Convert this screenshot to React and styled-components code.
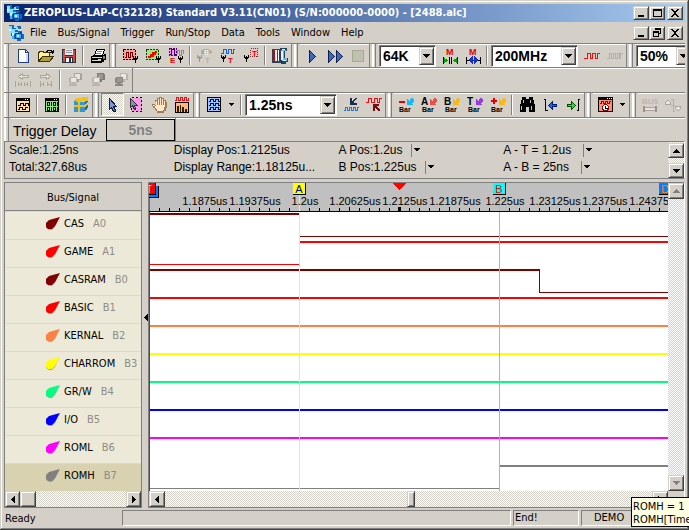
import React from "react";
import styled, { createGlobalStyle, css } from "styled-components";

const face = "#d4d0c8";
const shade = "#808080";
const ui = '"DejaVu Sans Condensed", "DejaVu Sans", sans-serif';
const sans = '"Liberation Sans", Arial, sans-serif';

const dither = css`
  background: conic-gradient(#fff 25%, ${face} 0 50%, #fff 0 75%, ${face} 0) 0 0 / 2px 2px;
`;
const raised = css`
  background: ${face};
  border: 1px solid;
  border-color: ${face} #404040 #404040 ${face};
  box-shadow: inset 1px 1px #fff, inset -1px -1px ${shade};
`;

const Global = createGlobalStyle`
  * { box-sizing: border-box; }
  body { margin: 0; background: ${face}; }
  button, input, select { font: inherit; color: inherit; padding: 0; margin: 0; border-radius: 0; }
  ul { list-style: none; margin: 0; padding: 0; }
  svg { display: block; flex: none; }
`;

const Frame = styled.div`
  position: relative;
  display: flex;
  flex-direction: column;
  height: 100vh;
  min-height: 530px;
  padding: 4px;
  overflow: hidden;
  background: ${face};
  box-shadow: inset -1px -1px #404040, inset 1px 1px ${face}, inset -2px -2px ${shade}, inset 2px 2px #fff;
  font: 11px/14px ${ui};
  color: #000;
  white-space: nowrap;
`;
const TitleBar = styled.header`
  display: flex;
  align-items: center;
  flex: none;
  height: 18px;
  padding: 0 2px;
  gap: 2px;
  color: #fff;
  background: linear-gradient(90deg, #0a246a, #a6caf0);
`;
const Title = styled.h1`
  flex: 1;
  margin: 0;
  font: bold 11px/16px ${ui};
`;
const WindowButtons = styled.div`
  display: flex;
  margin-left: auto;
  button:last-child { margin-left: 2px; }
`;
const SmallButton = styled.button`
  ${raised}
  display: grid;
  place-items: center;
  width: 16px;
  height: 14px;
  color: #000;
`;
const MenuBar = styled.nav`
  display: flex;
  align-items: center;
  flex: none;
  height: 21px;
  padding: 0 2px 0 4px;
`;
const MenuItem = styled.button`
  border: 0;
  background: none;
  padding: 0 5px 0 6px;
`;

const Toolbar = styled.div`
  display: flex;
  flex: none;
  height: ${(p) => (p.$tall ? 25 : 24)}px;
  border-top: 1px solid ${shade};
  box-shadow: inset 0 1px #fff;
  overflow: hidden;
`;
const Grip = styled.span`
  flex: none;
  width: 7px;
  background: linear-gradient(90deg, #fff 2px, ${face} 2px 4px, ${shade} 4px 5px, ${face} 5px);
`;
const Band = styled.span`
  flex: none;
  width: 9px;
  background: linear-gradient(90deg, ${shade} 1px, ${face} 1px 3px, #fff 3px 5px, ${face} 5px 6px, ${shade} 6px 7px, ${face} 7px);
`;
const End = styled.span`
  flex: none;
  width: 2px;
  border-left: 1px solid ${shade};
`;
const Rule = styled.span`
  flex: none;
  width: 2px;
  margin: 2px;
  border-left: 1px solid ${shade};
  border-right: 1px solid #fff;
`;
const ToolButton = styled.button`
  display: grid;
  place-items: center;
  flex: none;
  width: ${(p) => (p.$narrow ? 13 : 23)}px;
  height: 23px;
  border: 1px solid transparent;
  background: none;
  ${(p) => p.$on && css`
    ${dither}
    border-color: ${shade} #fff #fff ${shade};
  `}
`;
const ComboBox = styled.span`
  display: grid;
  flex: none;
  width: ${(p) => p.$width}px;
  height: 22px;
  margin: 1px 2px 0 1px;
  padding: 1px;
  background: #fff;
  border: 1px solid;
  border-color: ${shade} #fff #fff ${shade};
  box-shadow: inset 1px 1px #404040;
`;
const ComboSelect = styled.select`
  grid-area: 1 / 1;
  min-width: 0;
  appearance: none;
  border: 0;
  padding: 0 16px 0 2px;
  background: #fff;
  && { font: bold 14px/18px ${sans}; }
`;
const ComboArrow = styled.span`
  ${raised}
  grid-area: 1 / 1;
  justify-self: end;
  display: grid;
  place-items: center;
  width: 15px;
  pointer-events: none;
`;
const DelayLabel = styled.label`
  width: 95px;
  padding: 4px 0 0 2px;
  font: 14px/18px ${sans};
`;
const DelayInput = styled.input`
  width: 69px;
  height: 22px;
  margin: 1px 0;
  border: 1px solid #000;
  background: ${face};
  text-align: center;
  && { color: ${shade}; font: bold 14px/18px ${sans}; }
`;

const Info = styled.section`
  display: flex;
  flex: none;
  height: 38px;
  margin-bottom: 3px;
  border: 1px solid ${shade};
  border-right-color: #fff;
  font: 12px/17px ${sans};
`;
const InfoGrid = styled.div`
  display: grid;
  flex: 1;
  grid-template-columns: repeat(4, 1fr);
  grid-auto-rows: 17px;
  padding-left: 4px;
`;
const InfoPick = styled.button`
  display: flex;
  align-items: center;
  gap: ${(p) => (p.$wide ? 12 : 8)}px;
  border: 0;
  background: none;
  text-align: left;
  svg { border-left: 1px solid ${shade}; }
`;
const Spin = styled.div`
  ${dither}
  display: flex;
  flex-direction: column;
  justify-content: space-between;
  width: 16px;
  padding: 1px 0 0;
`;
const ScrollButton = styled.button`
  ${raised}
  display: grid;
  place-items: center;
  flex: none;
  width: ${(p) => (p.$wide ? 16 : 15)}px;
  height: ${(p) => (p.$short ? 15 : 16)}px;
`;

const Main = styled.main`
  display: flex;
  flex: 1;
  min-height: 0;
`;
const Signals = styled.aside`
  display: flex;
  flex-direction: column;
  flex: none;
  width: 138px;
  border: 1px solid ${shade};
  background: #ece9d8;
`;
const SignalsHead = styled.h2`
  flex: none;
  margin: 0;
  height: 28px;
  border-bottom: 1px solid ${shade};
  background: ${face};
  font: 11px/30px ${ui};
  text-align: center;
`;
const SignalList = styled.ul`
  flex: 1;
  min-height: 0;
  overflow: hidden;
`;
const Signal = styled.li`
  display: flex;
  align-items: center;
  height: 28px;
  padding: 0 0 4px 40px;
  border-top: 1px solid #dedac9;
  background: ${(p) => (p.$selected ? "#d8d2b0" : "#ece9d8")};
`;
const SignalName = styled.span`
  margin: 0 9px 0 4px;
`;
const Channel = styled.span`
  color: #8c8c88;
`;
const Splitter = styled.div`
  display: flex;
  align-items: center;
  justify-content: flex-end;
  flex: none;
  width: 6px;
  padding-bottom: 56px;
`;
const Scope = styled.section`
  display: grid;
  flex: 1;
  min-width: 0;
  grid-template: 29px 1fr 16px / minmax(0, 1fr) 16px;
  border: 1px solid ${shade};
  border-right-color: #fff;
`;
const Ruler = styled.div`
  position: relative;
  overflow: hidden;
  background: #c0c0c0;
  border-bottom: 1px solid #000;
`;
const RulerTicks = styled.svg`
  position: absolute;
  inset: 0;
`;
const TimeLabels = styled.div`
  position: relative;
  display: grid;
  grid-template-columns: repeat(10, 50px);
  padding: 11px 0 0 31px;
  font: 11px/14px ${sans};
  span { display: flex; justify-content: center; }
`;
const Flag = styled.span`
  position: absolute;
  top: ${(p) => p.$top || 0}px;
  left: ${(p) => p.$at - 6}px;
  width: 13px;
  height: 12px;
  border: solid #000;
  border-width: 0 1px 1px 0;
  background: ${(p) => p.$fill};
  color: ${(p) => p.$ink};
  font: 11px/12px ${sans};
  text-align: center;
`;
const Plot = styled.div`
  position: relative;
  min-height: 0;
  overflow: hidden;
  background: #fff;
`;
const PlotSvg = styled.svg`
  position: absolute;
  inset: 0;
`;
const VScroll = styled.div`
  ${dither}
  grid-row: 1 / 3;
  grid-column: 2;
  display: flex;
  flex-direction: column;
  justify-content: space-between;
`;
const HScroll = styled.div`
  ${dither}
  display: flex;
  flex: none;
  height: 16px;
`;
const Track = styled.span`
  flex: ${(p) => p.$grow} 1 0;
`;
const Thumb = styled.span`
  ${raised}
  flex: none;
  width: ${(p) => p.$size}px;
`;
const Status = styled.footer`
  display: flex;
  flex: none;
  height: 16px;
  margin-top: 2px;
  gap: 2px;
`;
const StatusText = styled.span`
  width: 116px;
  padding-left: 1px;
  line-height: 17px;
`;
const Pane = styled.span`
  flex: ${(p) => (p.$size ? `0 0 ${p.$size}px` : "1")};
  padding-left: ${(p) => p.$pad || 1}px;
  border: 1px solid;
  border-color: ${shade} #fff #fff ${shade};
`;
const Tip = styled.div`
  position: absolute;
  right: 0;
  bottom: 3px;
  width: 58px;
  height: 30px;
  padding: 2px 0 0 1px;
  overflow: hidden;
  border: 1px solid #000;
  border-right: 0;
  background: #ffffe1;
  line-height: 13px;
`;

/* ---------- icons ---------- */
const Pic = ({ w = 16, h = 16, children }) => (
  <svg width={w} height={h} viewBox={`0 0 ${w} ${h}`} fill="none" shapeRendering="crispEdges" aria-hidden="true">
    {children}
  </svg>
);
const L = ({ d, c = "#000", f = "none", w = 1 }) => <path d={d} stroke={c} fill={f} strokeWidth={w} />;
const F = ({ d, c = "#000" }) => <path d={d} fill={c} />;
const Letter = ({ x, y, s = 8, c = "#000", children }) => (
  <text x={x} y={y} fill={c} fontSize={s} fontWeight="bold" fontFamily="Liberation Sans, Arial, sans-serif">{children}</text>
);
const Probe = ({ x, y, c = "#000" }) => (
  <g transform={`translate(${x} ${y})`}><F c={c} d="M0 0h1v2h1v-1h1v1h1v-2h1v3h-1v1h-1v3h-1v-3h-1v-1h-1z" /></g>
);
const arrows = {
  down: [7, 4, "M0 0h7L3.5 4z"],
  up: [7, 4, "M0 4h7L3.5 0z"],
  left: [4, 7, "M4 0v7L0 3.5z"],
  right: [4, 7, "M0 0v7L4 3.5z"],
};
const Arrow = ({ dir = "down", c = "#000" }) => {
  const [w, h, d] = arrows[dir];
  return <Pic w={w} h={h}><F d={d} c={c} /></Pic>;
};
const SmallArrow = () => <Pic w={5} h={3}><F d="M0 0h5v1h-1v1h-1v1h-1v-1h-1v-1h-1z" /></Pic>;
const PickArrow = () => <Pic w={10} h={13}><F d="M2 4h7v1h-1v1h-1v1h-1v1h-1v-1h-1v-1h-1v-1h-1z" /></Pic>;

const AppIcon = () => (
  <Pic>
    <F c="#1468c8" d="M1 0h5v3h3v-2h4v3h-3v2h4v3h2v5h-3v2h-4v-2h-4v-3h-2v-3h-2v-3h1v-3h-1z" />
    <F c="#7fe0ff" d="M1 1h3v3h4v-2h2v3h-3v2h3v2h-4v4h-2v-5h-3z" />
    <F c="#d8faff" d="M1 4h2v2h-2zM9 4h4v1h-4zM4 8h2v2h-2z" />
    <F c="#0a3c98" d="M7 8h5v-1h2v6h-2v1h-5z" />
    <F c="#38b4f4" d="M8 9h5v4h-5zM4 11h2v3h-2z" />
    <F c="#e8fcff" d="M9 10h2v2h-2z" />
  </Pic>
);
const icons = {
  blank: <><L c="#1f3f7f" f="#fff" d="M3.5 1.5h7l3 3v10h-10z" /><L c="#1f3f7f" d="M10.5 1.5v3h3" /><F c="#c8daf4" d="M11 6h2v8h-2z" /></>,
  open: <><L d="M.5 13v-8.500h1v-1h4v1h6v3" c="#3a3000" f="#fff29a" /><L c="#3a3000" f="#b49c38" d="M.5 13.500l4-5h11l-4 5z" /><L d="M8 3.500h1v-1h4v1h1v2M11.500 4.500h4M15.500 2v3" /></>,
  save: <><F c="#27313c" d="M1 1h14v14h-14z" /><F c="#c45050" d="M2 2h2v12h-2zM12 2h2v12h-2zM4 8h8v1h-8z" /><F c="#e8eef0" d="M4 1h8v6h-8z" /><F c="#8a9aa0" d="M5 2h6v1h-6zM5 4h6v1h-6z" /><F c="#f4f4f4" d="M5 10h6v4h-6z" /><F c="#27313c" d="M8 10h2v4h-2z" /></>,
  print: <><L f="#fff" d="M4.500 7.500l2-6h8l-2 6z" /><F c="#888" d="M7 3h5v1h-5zM6 5h5v1h-5z" /><F d="M1 8h2v-1h11v-1h2v6h-2v2h-2v1h-11z" /><F c="#d8d8d0" d="M2 9h10v1h-10zM2 12h9v1h-9z" /><F c="#f0e060" d="M8 11h3v1h-3z" /><F c="#888" d="M13 8h2v3h-2z" /></>,
  boxRed: <><path d="M1.500 1.500h12v10h-12z" stroke="#000" fill="#ff9c9c" strokeDasharray="2 1" /><L c="#700000" d="M3 9.500h1.500v-5h2v5h2v-5h2v4h1" /><Probe x={11} y={8} /></>,
  boxGreen: <><path d="M1.500 1.500h12v10h-12z" stroke="#104010" fill="#90f080" strokeDasharray="2 1" /><F c="#f00" d="M3 10v-2h2v-2h2v-2h3v-1h2v2h-1v2h-2v2h-3v1z" /><Probe x={11} y={8} /></>,
  boxPurple: <><path d="M1.500 .5h7v7h-7z" stroke="#600070" fill="#f890f0" strokeDasharray="2 1" /><L c="#400060" d="M1 6.500h2.500v-5h3v5h2" /><L c="#8c8890" d="M9.500 6v-4h2v5h2v-5h2v4" /><Letter x={2} y={15} s={8} c="#e00000">E</Letter><Probe x={10} y={8} /></>,
  bProbe: <><F c="#b0aca0" d="M6 1h6v1h2v1h1v2h-1v1h-2v1h-6v-1h-2v-4h2z" /><Letter x={7} y={7} s={7} c="#f4f0e8">B</Letter><Probe x={0} y={7} c="#9c988c" /><Letter x={8} y={15} s={8} c="#b4b0a4">T</Letter></>,
  tProbe: <><L c="#1060ff" d="M1 5.500h2.500v-4h3v4h2v-4h3v4h2v-4h1" /><Probe x={1} y={7} /><Letter x={8} y={15} c="#e00000">T</Letter></>,
  tBox: <><path d="M7.500 .5h7v8h-7z" stroke="#803030" fill="#ffb8b8" strokeDasharray="1 1" /><Letter x={9} y={8} s={8} c="#e00000">T</Letter><Probe x={1} y={7} /></>,
  spool: <><F c="#28405c" d="M0 1h8v-1h7v3h-2v7h3v4h-2v2h-5v-1h-9z" /><F c="#78b4dc" d="M9 2h5v1h-2v7h3v3h-5z" /><F c="#e8f4fc" d="M9 3h2v9h-2zM10 1h3v1h-3zM11 12h3v1h-3z" /><F c="#fff" d="M2 2h5v11h-5z" /><L c="#e00000" d="M1 1.500h6M2.500 2v11M5.500 2v11M1 13.500h7" /></>,
  play: <L c="#10204c" f="#3c68c0" d="M5.500 2.500v12l6-6z" />,
  forward: <L c="#10204c" f="#3c68c0" d="M1.500 2.500v12l6-6zM9.500 2.500v12l6-6z" />,
  stop: <L c="#a8a898" f="#c0c0b0" d="M2.500 2.500h11v11h-11z" />,
  mIn: <><Letter x={4} y={7} s={9} c="#e00000">M</Letter><F c="#00a800" d="M1 9l5 3.500l-5 3.500zM16 9l-5 3.500l5 3.500z" /><L d="M1.500 9v7M7.500 9v7M9.500 9v7M15.500 9v7" /></>,
  mOut: <><Letter x={4} y={7} s={9} c="#e00000">M</Letter><L d="M1.500 9v7M15.500 9v7M2 12.500h13" /><F c="#1030d0" d="M8 8v8l-5-4zM9 8v8l5-4z" /></>,
  wave: <L c="#e81010" d="M0 10.500h3.500v-5h3v5h2v-5h3v5h2v-5h2" />,
  waveOff: <L c="#b4b0a4" d="M0 10.500h2.500v-5h2v5h2v-5h2v5h2v-5h2v5h1v-5h2" />,
  goL: <><L c="#aaa69c" f="#e8e4dc" d="M3.500 4.500l4-3v2h6v2h-6v2z" /><L c="#aaa69c" d="M.5 9v6M15.500 9v6M3.500 10v4M4 12.500h2M6.500 10v4M9.500 10v4M12.500 10v4M10 12.500h2" /></>,
  goR: <><L c="#aaa69c" f="#e8e4dc" d="M12.500 4.500l-4-3v2h-6v2h6v2z" /><L c="#aaa69c" d="M2.500 9v6M13.500 9v6M5.500 10v4M9.500 10v4M3 12.500h2M10 12.500h3" /></>,
  pc: <><F c="#a8a49c" d="M7 1h7v1h1v6h-3v2h-5z" /><F c="#e8e4dc" d="M8 2h5v5h-5z" /><F c="#b8b4ac" d="M3 5h7v6h-2v1h2v2h-8v-2h2v-1h-2v-5h1z" /><F c="#ece8e0" d="M4 6h5v4h-5z" /></>,
  pcDark: <><F c="#807c78" d="M7 1h7v1h1v6h-3v2h-5z" /><F c="#9c9890" d="M8 2h5v5h-5z" /><F c="#b8b4ac" d="M3 5h7v6h-2v1h2v2h-8v-2h2v-1h-2v-5h1z" /><F c="#ece8e0" d="M4 6h5v4h-5z" /></>,
  pcFill: <><F c="#b8b4ac" d="M7 1h7v1h1v6h-3v2h-5z" /><F c="#ece8e0" d="M8 2h5v5h-5z" /><F c="#8c8880" d="M3 5h7v6h-2v1h2v2h-8v-2h2v-1h-2v-5h1z" /><F c="#9c9890" d="M4 6h5v4h-5z" /></>,
  winWave: <><L f="#ffe08c" d="M1.500 1.500h13v13h-13z" /><F d="M1 1h14v3h-14z" /><F c="#fff" d="M10 2h1v1h-1zM12 2h1v1h-1z" /><L d="M3 8.500h2v-2h3v2h2v-2h3v2M3 12.500h1v-2h3v2h3v-2h3" /></>,
  winBits: <><L f="#8cf070" d="M1.500 1.500h13v13h-13z" /><F d="M1 1h14v3h-14z" /><F c="#fff" d="M10 2h1v1h-1zM12 2h1v1h-1z" /><L d="M3.500 5.500h2v3h-2zM7.500 5v4M9.500 5.500h2v3h-2zM13.500 5v4M3.500 10.500h2v3h-2zM7.500 10v4M9.500 10.500h2v3h-2zM13.500 10v4" /></>,
  cube: <><F c="#2c98dc" d="M1 4h1v-1h2v-1h11v9h-1v2h-2v2h-11z" /><F c="#90d8f8" d="M2 5h2v-2h10v1h-2v1z" /><F c="#1868a8" d="M12 5h1v-1h2v7h-1v2h-2z" /><L c="#f0c020" w={2} d="M6 5v10M1 9h11l3-3" /><L c="#f0c020" w={2} d="M6 5l3-4M9 1h5v2h-6M7 2h-3v2h3" /></>,
  cursor: <L c="#101c4c" f="#7c98cc" d="M4.500 1.500v11l2-2 2 4h2v-1l-2-4h3z" />,
  cursorBox: <><path d="M3.500 .5h10v14h-10z" stroke="#000" fill="#f898e8" strokeDasharray="2 2" /><L c="#303040" f="#9090a0" d="M2.500 1.500v9l2-2 2 4h1v-1l-1-3h3z" /></>,
  hand: <><F c="#a07c54" d="M4 3h2v-2h2v-1h3v1h2v2h2v2h1v6h-1v3h-2v2h-7v-2h-1v-1h-1v-2h-2v-2h-1v-2h3v1h1v-3h-1z" /><F c="#ffe8c8" d="M5 4h1v4h1v-6h1v6h1v-7h1v7h1v-6h1v6h1v-4h1v6h-1v3h-1v1h-6v-2h-1v-1h-1v-2h-2v-1h2v1h1z" /></>,
  chart: <><L c="#e81010" d="M1 3.500h1.500v-3h2v3h2v-3h2v3h2v-3h2v3h2v-3" /><L f="#ffb878" d="M1.500 5.500h13v10h-13z" /><F c="#301c08" d="M3 9h2v6h-2zM6 8h1v7h-1zM8 10h2v5h-2zM11 12h2v3h-2z" /></>,
  waves3: <><L c="#000" f="#9cc4ff" d="M1.500 .5h13v14h-13z" /><L c="#001040" d="M3 4.500h1v-2h3v2h2v-2h3v2h2M3 8.500h1v-2h3v2h2v-2h3v2h2M3 12.500h1v-2h3v2h2v-2h3v2h2" /></>,
  zoomDn: <><F c="#16304c" d="M7 1h2v3h1v-1h1v-1h1v-1h2v1h-1v1h-1v1h-1v2h3v2h-7z" /><L c="#1878e8" d="M1 13.500h1.500v-3h2v3h2v-3h2v3h2v-3h2v3h2v-3h1" /></>,
  zoomUp: <><L c="#e81010" d="M0 5.500h2.500v-4h3v4h3v-4h3v4h2v-4h2" /><F c="#701010" d="M7 7h6v2h-2v1h1v1h1v1h1v2h-2v-1h-1v-1h-1v-1h-1v3h-2z" /></>,
  find: <><F d="M3 0h4v2h3v-2h4v3h1v4h1v8h-6v-5h-3v5h-6v-8h1v-4h1z" /><F c="#c0c0c0" d="M4 3h1v3h-1zM11 3h1v3h-1zM2 9h1v4h-1zM12 9h1v4h-1z" /></>,
  back: <><L d="M2 2.500h1.500v11h2" /><L c="#001c80" f="#2060ff" d="M6.500 8.500l4-4v3h4v2h-4v3z" /></>,
  fwd: <><L d="M15 2.500h-1.500v11h-2" /><L c="#004c00" f="#20e820" d="M10.500 8.500l-4-4v3h-4v2h4v3z" /></>,
  clock: <><L f="#ff8c7c" d="M1.500 .5h14v14h-14z" /><F d="M1 0h15v3h-15z" /><F c="#fff" d="M10 1h1v1h-1zM12 1h1v1h-1zM14 1h1v1h-1z" /><L c="#b00000" d="M3 6.500h1v-2h2v2h2v-2h2v2h2v-2h2" /><circle cx="8.500" cy="10.500" r="3" fill="#fff" stroke="#701010" /><L d="M8.500 9v2h2" /></>,
  bus: <><Letter x={0} y={7} s={8} c="#bcb8b0">BUS</Letter><L c="#a8a49c" f="#e8e4dc" d="M1.500 10.500h13v3h-13z" /><F c="#98948c" d="M1 9h2v6h-2zM13 9h2v6h-2z" /></>,
  updown: <><L c="#aaa69c" f="#e8e4dc" d="M.5 7.500h5v-2l-2-2h-1l-2 2zM10.500 9.500h5v2l-2 2h-1l-2-2z" /><L c="#b4b0a4" d="M6 2.500h2v6h2M6 8.500h2v6h2" /></>,
};
const barColors = {
  "-": ["#e80000", "#18b8f8"], A: ["#000", "#f84848"], B: ["#000", "#f8b818"], T: ["#000", "#9838f0"], "+": ["#e80000", "#f8b818"],
};
const BarIcon = ({ k }) => (
  <Pic>
    {k === "-" && <F c="#e80000" d="M1 4h6v2h-6z" />}
    {k === "+" && <F c="#e80000" d="M3 1h2v2h2v2h-2v2h-2v-2h-2v-2h2z" />}
    {barColors[k][0] === "#000" && <Letter x={0} y={8} s={10}>{k}</Letter>}
    <F c={barColors[k][1]} d="M9 2h1v1h1v1h1v-2h1v-1h2v1h1v3h-1v1h-1v1h1v1h-6z" />
    <Letter x={1} y={15} s={7}>Bar</Letter>
  </Pic>
);

const Tool = ({ name, label, on, off }) => (
  <ToolButton aria-label={label} $on={on} disabled={off}><Pic>{icons[name]}</Pic></ToolButton>
);
const Combo = ({ label, value, width }) => (
  <ComboBox $width={width}>
    <ComboSelect aria-label={label} defaultValue={value}><option>{value}</option></ComboSelect>
    <ComboArrow><Arrow /></ComboArrow>
  </ComboBox>
);
const Pick = ({ wide, children }) => (
  <InfoPick aria-haspopup="listbox" $wide={wide}>{children}<PickArrow /></InfoPick>
);
const glyphs = {
  Minimize: <F d="M2 7h6v2h-6z" />,
  Maximize: <><L d="M1.500 1.500h8v7h-8z" /><F d="M1 1h9v2h-9z" /></>,
  Restore: <><L d="M3.500 1.500h5v4h-5" /><F d="M3 0h6v2h-6z" /><L d="M1.500 4.500h5v4h-5z" f={face} /><F d="M1 3h6v2h-6z" /></>,
  Close: <F d="M1 1h2v1h1v1h2v-1h1v-1h2v1h-1v1h-1v1h-1v2h1v1h1v1h1v1h-2v-1h-1v-1h-2v1h-1v1h-2v-1h1v-1h1v-1h1v-2h-1v-1h-1v-1h-1z" />,
};
const Controls = ({ middle }) => (
  <WindowButtons>
    {["Minimize", middle, "Close"].map((n) => (
      <SmallButton key={n} aria-label={n}><Pic w={11} h={10}>{glyphs[n]}</Pic></SmallButton>
    ))}
  </WindowButtons>
);

const signals = [
  ["CAS", "A0", "#800000"], ["GAME", "A1", "#ff0000"], ["CASRAM", "B0", "#800000"], ["BASIC", "B1", "#ff0000"],
  ["KERNAL", "B2", "#ff8040"], ["CHARROM", "B3", "#ffff00"], ["GR/W", "B4", "#00ff80"], ["I/O", "B5", "#0000ff"],
  ["ROML", "B6", "#ff00ff"], ["ROMH", "B7", "#808080"],
];
const times = ["1.1875us", "1.19375us", "1.2us", "1.20625us", "1.2125us", "1.21875us", "1.225us", "1.23125us", "1.2375us", "1.24375us"];
/* Level changes by signal: x where the level starts, and the level. */
const levels = {
  CAS: [[0, 1], [151, 0]], GAME: [[0, 0], [151, 1]], CASRAM: [[0, 1], [390, 0]], ROMH: [[0, 0], [351, 1]],
};

const Wave = ({ name, color, row }) => {
  const steps = levels[name] || [[0, 1]];
  const top = row * 28 + 1;
  return (
    <g fill={color}>
      {steps.map(([x, high], i) => {
        const next = steps[i + 1];
        const y = high ? top : top + 23;
        return <rect key={x} x={x} y={y} width={next ? next[0] - x : "100%"} height={high ? 2 : 1} />;
      })}
      {name === "CASRAM" && <rect x={390} y={top} width={1} height={24} />}
    </g>
  );
};
const SignalMark = ({ color }) => (
  <svg width="15" height="13" viewBox="0 0 15 13" aria-hidden="true">
    <path d="M14 1L3 5L1 8v3l3 2h3l3-3z" fill="#a8a8a0" />
    <path d="M15 0L4 3L1 6v4l2 2h4l3-3z" fill={color} />
  </svg>
);

export default function App() {
  return (
    <Frame>
      <Global />
      <TitleBar>
        <AppIcon />
        <Title>ZEROPLUS-LAP-C(32128) Standard V3.11(CN01) (S/N:000000-0000) - [2488.alc]</Title>
        <Controls middle="Maximize" />
      </TitleBar>
      <MenuBar>
        <AppIcon />
        {["File", "Bus/Signal", "Trigger", "Run/Stop", "Data", "Tools", "Window", "Help"].map((m) => <MenuItem key={m}>{m}</MenuItem>)}
        <Controls middle="Restore" />
      </MenuBar>

      <Toolbar>
        <Grip />
        <Tool name="blank" label="New" /><Tool name="open" label="Open" /><Tool name="save" label="Save" />
        <Rule /><Tool name="print" label="Print" /><Band />
        <Tool name="boxRed" label="Sampling setup" /><Tool name="boxGreen" label="Channel setup" /><Tool name="boxPurple" label="Trigger edge" />
        <Rule /><Tool name="bProbe" label="Bus trigger" off /><Tool name="tProbe" label="Trigger property" /><Tool name="tBox" label="Trigger range" />
        <Rule /><Tool name="spool" label="Compression" /><Band />
        <Tool name="play" label="Run" /><Tool name="forward" label="Repetitive run" /><Tool name="stop" label="Stop" off /><Band />
        <Combo label="Memory depth" value="64K" width={57} />
        <Tool name="mIn" label="Less memory" /><Tool name="mOut" label="More memory" /><Rule />
        <Combo label="Sampling frequency" value="200MHz" width={87} />
        <Tool name="wave" label="Internal clock" /><Tool name="waveOff" label="External clock" off /><Band />
        <Combo label="Trigger position" value="50%" width={57} />
      </Toolbar>
      <Toolbar $tall>
        <Grip />
        <Tool name="goL" label="Previous page" off /><Tool name="goR" label="Next page" off /><Rule />
        <Tool name="pc" label="First module" off /><Tool name="pcDark" label="Second module" off /><Tool name="pcFill" label="Third module" off />
        <End />
      </Toolbar>
      <Toolbar $tall>
        <Grip />
        <Tool name="winWave" label="Waveform view" /><Rule /><Tool name="winBits" label="State view" /><Rule /><Tool name="cube" label="Navigator" /><Band />
        <Tool name="cursor" label="Normal" on /><Tool name="cursorBox" label="Zoom area" /><Tool name="hand" label="Hand" /><Tool name="chart" label="Statistics" /><Band />
        <Tool name="waves3" label="Waveform mode" /><ToolButton $narrow aria-label="Waveform modes"><SmallArrow /></ToolButton><Rule />
        <Combo label="Time scale" value="1.25ns" width={92} />
        <Tool name="zoomDn" label="Zoom in" /><Tool name="zoomUp" label="Zoom out" /><Band />
        {["-", "A", "B", "T", "+"].map((k) => <ToolButton key={k} aria-label={`${k} Bar`}><BarIcon k={k} /></ToolButton>)}
        <Rule /><Tool name="find" label="Find" /><Tool name="back" label="Previous edge" /><Tool name="fwd" label="Next edge" /><Band />
        <Tool name="clock" label="Refresh" /><ToolButton $narrow aria-label="Refresh options"><SmallArrow /></ToolButton><Band />
        <Tool name="bus" label="Bus" off /><Tool name="updown" label="Bus order" off />
      </Toolbar>
      <Toolbar>
        <Grip />
        <DelayLabel htmlFor="delay">Trigger Delay</DelayLabel>
        <DelayInput id="delay" defaultValue="5ns" disabled />
        <End />
      </Toolbar>

      <Info>
        <InfoGrid>
          <span>Scale:1.25ns</span><span>Display Pos:1.2125us</span><Pick>A Pos:1.2us</Pick><Pick wide>A - T = 1.2us</Pick>
          <span>Total:327.68us</span><span>Display Range:1.18125u...</span><Pick>B Pos:1.225us</Pick><Pick wide>A - B = 25ns</Pick>
        </InfoGrid>
        <Spin>
          <ScrollButton $wide $short aria-label="Scroll up"><Arrow dir="up" /></ScrollButton>
          <ScrollButton $wide $short aria-label="Scroll down"><Arrow /></ScrollButton>
        </Spin>
      </Info>

      <Main>
        <Signals>
          <SignalsHead>Bus/Signal</SignalsHead>
          <SignalList>
            {signals.map(([name, channel, color]) => (
              <Signal key={name} $selected={name === "ROMH"}>
                <SignalMark color={color} /><SignalName>{name}</SignalName><Channel>{channel}</Channel>
              </Signal>
            ))}
          </SignalList>
          <HScroll>
            <ScrollButton aria-label="Scroll left"><Arrow dir="left" /></ScrollButton>
            <Thumb $size={16} /><Track $grow={1} />
            <ScrollButton aria-label="Scroll right"><Arrow dir="right" /></ScrollButton>
          </HScroll>
        </Signals>
        <Splitter><Arrow dir="left" /></Splitter>
        <Scope>
          <Ruler>
            <RulerTicks width="100%" height="100%" shapeRendering="crispEdges">
              <defs>
                <pattern id="minor" width="10" height="28" patternUnits="userSpaceOnUse"><rect y="25" width="1" height="3" /></pattern>
                <pattern id="major" width="50" height="28" patternUnits="userSpaceOnUse"><rect y="24" width="1" height="4" /></pattern>
              </defs>
              <rect width="100%" height="28" fill="url(#minor)" />
              <rect width="100%" height="28" fill="url(#major)" />
              <rect x="249" y="24" width="3" height="4" />
              <path d="M244 0h13l-6 7h-1z" fill="#f00" />
              <rect x="150" y="11" width="1" height="17" fill="#ff0" />
              <rect x="350" y="11" width="1" height="17" fill="#0ff" />
              <rect width="1" height="28" fill="#0080ff" />
            </RulerTicks>
            <TimeLabels>{times.map((t) => <span key={t}>{t}</span>)}</TimeLabels>
            <Flag $at={3} $top={3} $fill="#0080ff" />
            <Flag $at={0} $fill="#f00" $ink="#80ffff">T</Flag>
            <Flag $at={150} $fill="#ff0" $ink="#0000c0">A</Flag>
            <Flag $at={350} $fill="#0ff" $ink="#f00000">B</Flag>
            <Flag $at={516} $fill="#0080ff" $ink="#ff8000">D</Flag>
          </Ruler>
          <VScroll>
            <ScrollButton $wide aria-label="Scroll up"><Arrow dir="up" c={shade} /></ScrollButton>
            <ScrollButton $wide aria-label="Scroll down"><Arrow c={shade} /></ScrollButton>
          </VScroll>
          <Plot>
            <PlotSvg width="100%" height="100%" shapeRendering="crispEdges" role="img" aria-label="Waveforms">
              {signals.map(([name, , color], row) => <Wave key={name} name={name} color={color} row={row} />)}
              <rect width="1" height="100%" fill="#f00" />
              <rect x="150" width="1" height="100%" fill="#ff0" />
              <rect x="350" width="1" height="100%" fill="#0ff" />
            </PlotSvg>
          </Plot>
          <HScroll>
            <ScrollButton $wide aria-label="Scroll left"><Arrow dir="left" /></ScrollButton>
            <Track $grow={242} /><Thumb $size={8} /><Track $grow={238} />
            <ScrollButton $wide aria-label="Scroll right"><Arrow dir="right" /></ScrollButton>
          </HScroll>
        </Scope>
      </Main>
      <Status>
        <StatusText>Ready</StatusText>
        <Pane />
        <Pane $size={66}>End!</Pane>
        <Pane $size={104} $pad={12}>DEMO</Pane>
      </Status>
      <Tip role="tooltip">ROMH = 1<br />ROMH[Time</Tip>
    </Frame>
  );
}
